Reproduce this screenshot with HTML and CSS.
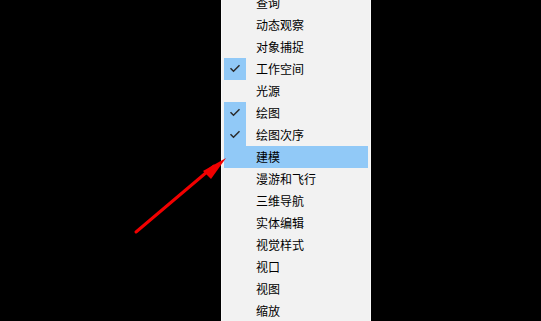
FILE: index.html
```html
<!DOCTYPE html>
<html lang="zh">
<head>
<meta charset="utf-8">
<link rel="stylesheet" href="styles.css">
</head>
<body>
<div class="menu">
  <div class="item"><span class="chk"></span><span class="label">查询</span></div>
  <div class="item"><span class="chk"></span><span class="label">动态观察</span></div>
  <div class="item"><span class="chk"></span><span class="label">对象捕捉</span></div>
  <div class="item"><span class="chk on"><svg viewBox="0 0 22 22" width="22" height="22"><path d="M6.5 10.2 L9.5 13.2 L15.5 7.2" fill="none" stroke="#2b2b2b" stroke-width="1.5"/></svg></span><span class="label">工作空间</span></div>
  <div class="item"><span class="chk"></span><span class="label">光源</span></div>
  <div class="item"><span class="chk on"><svg viewBox="0 0 22 22" width="22" height="22"><path d="M6.5 10.2 L9.5 13.2 L15.5 7.2" fill="none" stroke="#2b2b2b" stroke-width="1.5"/></svg></span><span class="label">绘图</span></div>
  <div class="item"><span class="chk on"><svg viewBox="0 0 22 22" width="22" height="22"><path d="M6.5 10.2 L9.5 13.2 L15.5 7.2" fill="none" stroke="#2b2b2b" stroke-width="1.5"/></svg></span><span class="label">绘图次序</span></div>
  <div class="item hover"><span class="chk"></span><span class="label">建模</span></div>
  <div class="item"><span class="chk"></span><span class="label">漫游和飞行</span></div>
  <div class="item"><span class="chk"></span><span class="label">三维导航</span></div>
  <div class="item"><span class="chk"></span><span class="label">实体编辑</span></div>
  <div class="item"><span class="chk"></span><span class="label">视觉样式</span></div>
  <div class="item"><span class="chk"></span><span class="label">视口</span></div>
  <div class="item"><span class="chk"></span><span class="label">视图</span></div>
  <div class="item"><span class="chk"></span><span class="label">缩放</span></div>
</div>
<svg class="arrow" width="541" height="321" viewBox="0 0 541 321">
  <line x1="136" y1="232" x2="214" y2="166" stroke="#f20000" stroke-width="3" stroke-linecap="round"/>
  <polygon points="226,158 203,171 211,179" fill="#f20000"/>
</svg>
</body>
</html>
```
FILE: styles.css
```css
html, body {
  margin: 0;
  padding: 0;
  background: #000;
  width: 541px;
  height: 321px;
  overflow: hidden;
}
body {
  position: relative;
  font-family: "Noto Sans CJK SC", "Microsoft YaHei", sans-serif;
}
.menu {
  margin-left: 221px;
  margin-top: -8px;
  width: 144px;
  padding: 0 2px;
  background: #f2f2f2;
  border-left: 1px solid #f9f9f9;
  border-right: 1px solid #f9f9f9;
}
.item {
  display: flex;
  align-items: center;
  height: 22px;
}
.chk {
  width: 22px;
  height: 22px;
  flex: none;
}
.chk svg { display: block; }
.chk.on { background: #91c9f7; }
.item.hover { background: #91c9f7; }
.label {
  margin-left: 10px;
  font-size: 12px;
  line-height: 22px;
  color: #000;
}
.arrow {
  position: absolute;
  left: 0;
  top: 0;
}
```
